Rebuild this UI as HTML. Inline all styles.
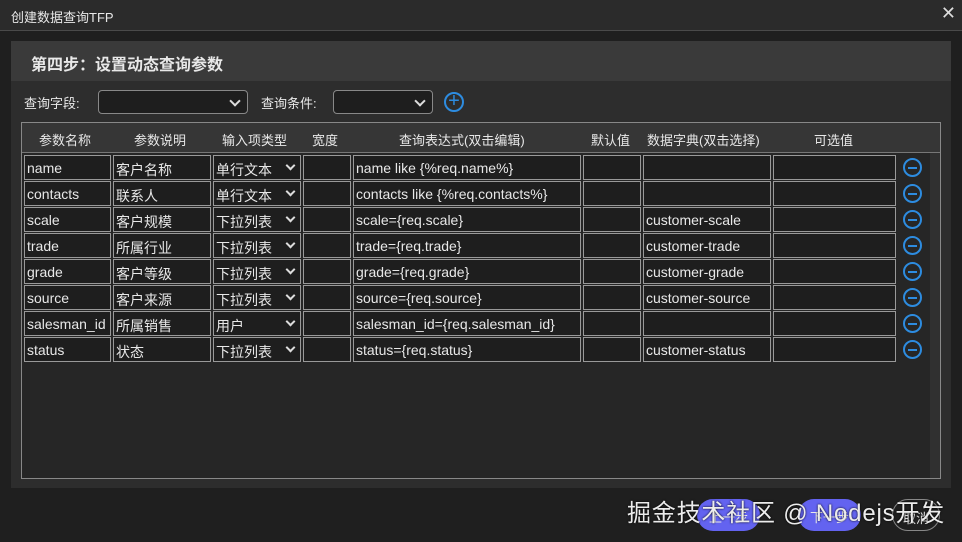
<!DOCTYPE html>
<html><head><meta charset="utf-8"><style>
*{box-sizing:border-box;margin:0;padding:0}
body{width:962px;height:542px;background:#1f1f1f;font-family:"Liberation Sans","Noto Sans CJK SC",sans-serif;color:#e8e8e8;position:relative;overflow:hidden;font-size:14px}
.abs{position:absolute}
.title{left:0;top:0;width:962px;height:31px;background:#2b2b2b;border-bottom:1px solid #4a4a4a;font-size:13px;padding:7px 11px}
.close{right:6px;top:3px;font-size:18px;color:#ddd}
.panel{left:11px;top:41px;width:940px;height:447px;background:#2d2d2d}
.ph{left:11px;top:41px;width:940px;height:40px;background:#3a3a3a;font-size:16px;font-weight:bold;padding:10px 20px}
.sel{height:24px;border:1px solid #888;border-radius:4px;background:#1e1e1e}
.sel:after{content:"";position:absolute;right:8px;top:6px;width:6px;height:6px;border-right:2px solid #ddd;border-bottom:2px solid #ddd;transform:rotate(45deg)}
.tbl{left:21px;top:122px;width:920px;height:357px;border:1px solid #888;background:#262626}
.th{left:22px;top:123px;width:918px;height:30px;background:#363636;border-bottom:1px solid #777}
.th span{position:absolute;top:7px;font-size:13px}
.c{position:absolute;height:25px;border:1px solid #999;background:#1e1e1e;font-size:14px;padding:4px 2px 2px;white-space:nowrap;overflow:hidden}
.dd:after{content:"";position:absolute;right:6px;top:6px;width:5px;height:5px;border-right:2px solid #ddd;border-bottom:2px solid #ddd;transform:rotate(45deg)}
.m{position:absolute;width:19px;height:19px;border:2px solid #2d8ce0;border-radius:50%}
.m:after{content:"";position:absolute;left:3px;right:3px;top:7px;height:2px;background:#2d8ce0}
.btn{height:32px;border-radius:16px;background:#6363f0;font-size:13px;text-align:center;padding-top:8px}
</style></head><body>
<div class="abs title">创建数据查询TFP</div>
<div class="abs close">✕</div>
<div class="abs panel"></div>
<div class="abs ph">第四步：设置动态查询参数</div>
<div class="abs" style="left:24px;top:93px;font-size:13px">查询字段:</div>
<div class="abs sel" style="left:98px;top:90px;width:150px"></div>
<div class="abs" style="left:261px;top:93px;font-size:13px">查询条件:</div>
<div class="abs sel" style="left:333px;top:90px;width:100px"></div>
<div class="abs" style="left:444px;top:92px;width:20px;height:20px;border:2px solid #2d8ce0;border-radius:50%;color:#2d8ce0;font-size:20px;line-height:14px;text-align:center">+</div>
<div class="abs tbl"></div>
<div class="abs" style="left:930px;top:153px;width:10px;height:325px;background:#303030"></div>
<div class="abs th">
<span style="left:17px">参数名称</span><span style="left:112px">参数说明</span><span style="left:200px">输入项类型</span><span style="left:290px">宽度</span><span style="left:377px">查询表达式(双击编辑)</span><span style="left:569px">默认值</span><span style="left:625px">数据字典(双击选择)</span><span style="left:792px">可选值</span>
</div>
<div id="rows"></div>
<div class="abs btn" style="left:697px;top:499px;width:63px">上一步</div>
<div class="abs btn" style="left:798px;top:499px;width:63px">下一步</div>
<div class="abs btn" style="left:892px;top:499px;width:48px;background:transparent;border:1px solid #888">取消</div>
<div class="abs" style="left:627px;top:493px;font-size:24px;letter-spacing:0.8px;color:#ececec;text-shadow:0 0 2px #000">掘金技术社区 @ Nodejs开发</div>
<script>
var d=[["name","客户名称","单行文本","name like {%req.name%}",""],["contacts","联系人","单行文本","contacts like {%req.contacts%}",""],["scale","客户规模","下拉列表","scale={req.scale}","customer-scale"],["trade","所属行业","下拉列表","trade={req.trade}","customer-trade"],["grade","客户等级","下拉列表","grade={req.grade}","customer-grade"],["source","客户来源","下拉列表","source={req.source}","customer-source"],["salesman_id","所属销售","用户","salesman_id={req.salesman_id}",""],["status","状态","下拉列表","status={req.status}","customer-status"]];
var cols=[[24,87],[113,98],[213,88],[303,48],[353,228],[583,58],[643,128],[773,123]];
var h="";
d.forEach(function(r,i){var y=155+i*26;var v=[r[0],r[1],r[2],"",r[3],"",r[4],""];
cols.forEach(function(c,j){h+='<div class="c'+(j==2?' dd':'')+'" style="left:'+c[0]+'px;top:'+y+'px;width:'+c[1]+'px">'+v[j]+'</div>';});
h+='<div class="m" style="left:903px;top:'+(y+3)+'px"></div>';});
document.getElementById("rows").innerHTML=h;
</script>
</body></html>
